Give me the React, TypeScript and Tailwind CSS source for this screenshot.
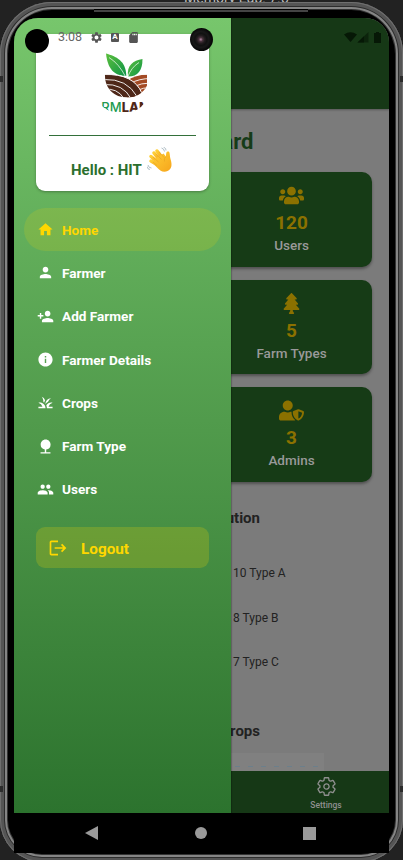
import React from "react";
import { MdHome, MdPerson, MdPersonAdd, MdInfo, MdGrass, MdNature, MdPeople, MdSettings, MdSdCard } from "react-icons/md";
import { FaTree, FaUserShield, FaUsers } from "react-icons/fa";
import { IoSettingsOutline } from "react-icons/io5";

const menu = [
  { label: "Home", Icon: MdHome },
  { label: "Farmer", Icon: MdPerson },
  { label: "Add Farmer", Icon: MdPersonAdd },
  { label: "Farmer Details", Icon: MdInfo },
  { label: "Crops", Icon: MdGrass },
  { label: "Farm Type", Icon: MdNature },
  { label: "Users", Icon: MdPeople },
];

const stats = [
  { value: "120", label: "Users", Icon: FaUsers },
  { value: "5", label: "Farm Types", Icon: FaTree },
  { value: "3", label: "Admins", Icon: FaUserShield },
];

function FarmLogo() {
  return (
    <div className="mt-[18px] flex h-[60px] w-[50px] flex-col items-center overflow-hidden rounded-b-[19px]">
      <svg className="h-[46px] w-[50px] shrink-0" viewBox="96 51.500 50 46">
        <defs>
          <linearGradient id="leaf" x1="0" y1="0" x2="1" y2="1">
            <stop offset="0" stopColor="#5cbf3c" />
            <stop offset="1" stopColor="#0e9447" />
          </linearGradient>
          <clipPath id="bowl">
            <path d="M104 74H148C148.500 88 139 97 126 97C113 97 103.500 88 104 74Z" />
          </clipPath>
        </defs>
        <path d="M105 53C115 56 125 60 125.300 75.500C116 75 107 72 105 53Z" fill="url(#leaf)" />
        <path d="M141.500 58.500C141.500 70 137 76 127 76C125.500 65 132 60 141.500 58.500Z" fill="url(#leaf)" />
        <path d="M108 57Q118 63 125 77M138 62Q130 67 126.500 77" stroke="#fff" strokeWidth=".7" fill="none" />
        <g clipPath="url(#bowl)">
          <path d="M126 80Q136 74 149 74V98H126Z" fill="#a34a24" />
          <path d="M129 83Q138 78 150 78M133 86Q140 82.500 150 82.500M136 90Q142 87 150 87" stroke="#fff" strokeWidth=".9" fill="none" />
          <path d="M103 74Q133 73 141 93L130 99H103Z" fill="#4e2718" stroke="#fff" strokeWidth="1" />
          <path d="M103 79Q126 78 136 96M103 84Q122 83 130 98M103 89Q116 87 123 98" stroke="#fff" strokeWidth=".9" fill="none" />
        </g>
      </svg>
      <div className="mt-[1px] shrink-0 whitespace-nowrap font-[Inter,sans-serif] text-[13px] font-medium leading-[16px] text-[#229a50]">
        FARM<span className="font-extrabold text-[#4e2718]">LAND</span>
      </div>
    </div>
  );
}

function WavingHand() {
  return (
    <svg className="mb-[14px] ml-[6px] h-[26px] w-[26px] shrink-0" viewBox="0 0 52 52">
      <defs>
        <linearGradient id="skin" x1="0" y1="0" x2="1" y2="1">
          <stop offset="0" stopColor="#ffcf35" />
          <stop offset="1" stopColor="#f6a51c" />
        </linearGradient>
      </defs>
      <g stroke="url(#skin)" strokeWidth="7" strokeLinecap="round">
        <path d="M25 26L14 12" />
        <path d="M30 22L20 8" />
        <path d="M22 31L8 19" />
        <path d="M22 36L8 28" />
      </g>
      <path d="M18 22L33 13L38 19C38 11 39 8 43 9C46 10 45 15 47 24C51 37 49 44 41 48C33 52 25 47 20 41L11 32Z" fill="url(#skin)" />
      <path d="M12 20L23 30M18 13L29 25M24 9L34 21M12 30L20 37M38 19Q33 23 35 29" stroke="#e09a20" strokeWidth="1" fill="none" />
      <path d="M29 2Q34 3 35 9M33 0Q39 3 38 7M2 36Q3 42 9 42M0 39Q1 45 6 45" stroke="#9aabb5" strokeWidth="1.500" fill="none" />
    </svg>
  );
}

function Drawer() {
  return (
    <aside className="absolute left-0 top-0 flex h-[795px] w-[217px] flex-col items-center bg-linear-to-b from-[#77c66c] to-[#2c732e] shadow-[1px_0_1px_rgba(0,0,0,0.2)]">
      <div className="mt-[16px] flex h-[157px] w-[173px] shrink-0 flex-col items-center rounded-[9px] bg-white shadow-[0_1px_3px_rgba(0,0,0,0.3)]">
        <div className="flex w-full pl-[61px]"><FarmLogo /></div>
        <div className="mt-[23px] h-px w-[147px] bg-[#33703a]" />
        <div className="mt-[10px] flex h-[41px] w-full items-end pl-[35px] text-[15px] font-bold leading-[18px] text-[#2c6f2e]">
          <span className="mb-[8px] w-[70px] whitespace-nowrap">Hello : HIT</span>
          <WavingHand />
        </div>
      </div>
      <nav className="mt-[17px] flex w-[197px] flex-col">
        {menu.map(({ label, Icon }, i) => (
          <div key={label} className={`flex h-[43.300px] items-center gap-[8px] rounded-full pl-[13px] text-[13.600px] font-bold leading-[17px] ${i === 0 ? "bg-[#ffd700]/15 text-[#ffd700]" : "text-white"}`}>
            <Icon size={17} />
            <span className="mt-px">{label}</span>
          </div>
        ))}
      </nav>
      <div className="mt-[16px] flex h-[41px] w-[173px] items-center gap-[13px] rounded-[9px] bg-[#ffd700]/20 pl-[12px] text-[15.300px] font-bold text-[#ffd700]">
        <svg width="20" height="20" viewBox="0 0 24 24" fill="currentColor">
          <path d="M17 7l-1.410 1.410L18.170 11H8v2h10.170l-2.580 2.580L17 17l5-5M4 5h8V3H4c-1.100 0-2 .9-2 2v14c0 1.100.9 2 2 2h8v-2H4V5z" />
        </svg>
        <span className="mt-[3px]">Logout</span>
      </div>
    </aside>
  );
}

function Dashboard() {
  return (
    <main className="flex h-[795px] flex-col bg-[#7b7b7b]">
      <div className="h-[91px] shrink-0 bg-[#163816] shadow-[0_1px_2px_rgba(0,0,0,0.3)]" />
      <h1 className="mt-[18px] w-[239.500px] text-right text-[22px] font-bold leading-[30px] text-[#163b18]">Dashboard</h1>
      <div className="mt-[15px] flex flex-col gap-[13px] px-[17px]">
        {stats.map(({ value, label, Icon }) => (
          <div key={label} className="flex h-[94.700px] flex-col items-center rounded-[10px] bg-[#163b16] pl-[180px] shadow-[0_2px_3px_rgba(0,0,0,0.35)]">
            <Icon className="mt-[13px] h-[21px] w-[25px] shrink-0 text-[#8b7100]" />
            <div className="mt-[5px] text-[19px] font-bold leading-[24px] text-[#8b7100]">{value}</div>
            <div className="text-[13.500px] font-medium leading-[20px] text-[#999]">{label}</div>
          </div>
        ))}
      </div>
      <h2 className="mt-[26px] w-[246px] text-right text-[15px] font-bold leading-[20px] text-[#222]">Distribution</h2>
      <div className="mt-[34px] flex flex-col pl-[219px] text-[12px] text-[#222]">
        {["10 Type A", "8 Type B", "7 Type C"].map((t) => (
          <div key={t} className="h-[44.700px] leading-[22px]">{t}</div>
        ))}
      </div>
      <h2 className="mt-[25px] w-[246px] text-right text-[15px] font-bold leading-[20px] text-[#222]">Crops</h2>
      <div className="mt-[12px] w-[310px] grow bg-[#808080] pt-[13px]">
        <div className="h-px bg-[repeating-linear-gradient(90deg,#6c7f8b_0_5px,transparent_5px_13px)]" />
      </div>
      <div className="flex h-[42px] shrink-0 flex-col bg-[#163816] pl-[249px]">
        <div className="flex w-[126px] flex-col items-center text-[#8f8f8f]">
          <IoSettingsOutline size={21} className="mt-[5px]" />
          <span className="mt-[2px] text-[8.500px] font-medium leading-[12px]">Settings</span>
        </div>
      </div>
    </main>
  );
}

function StatusBar() {
  return (
    <div className="absolute left-0 top-0 flex h-[40px] w-full items-center pl-[11px] pr-[7px]">
      <div className="mt-[5px] h-[24px] w-[24px] rounded-full bg-black" />
      <span className="ml-[9px] mt-[-2px] w-[32px] text-[12.500px] text-[#666]">3:08</span>
      <MdSettings size={13} className="mt-[-2px] text-[#555]" />
      <span className="ml-[8px] mt-[-2px] flex h-[9px] w-[8px] items-center justify-center rounded-[1px] bg-[#555] text-[8px] font-bold text-white">A</span>
      <MdSdCard size={13} className="ml-[8px] mt-[-2px] text-[#555]" />
      <div className="ml-[50px] mt-[3px] h-[23px] w-[23px] rounded-full bg-[radial-gradient(circle_at_47%_50%,#b889a8_0,#49343d_2px,#221c1e_4px,#111_6px,#181818_8px,#080808_11px)]" />
      <svg className="ml-auto mt-[-2px] h-[13px] w-[38px] text-[#061806]" viewBox="0 0 38 13" fill="currentColor">
        <path d="M0 3.500Q6.500-1 13 3.500L6.500 11Z" />
        <path d="M13.500 11.500L24.500 1V11.500Z" opacity=".6" />
        <path d="M13.500 11.500L20 5.200V11.500Z" />
        <path d="M30 2H32V1H35V2H37V12H30Z" />
      </svg>
    </div>
  );
}

export default function App() {
  return (
    <div className="relative h-[860px] w-[403px] overflow-hidden bg-[#222] font-[Roboto,sans-serif]">
      <div className="absolute left-[184px] top-[-9px] whitespace-nowrap text-[14px] leading-[15px] text-[#bbb]">Memory Eap: 7.5</div>
      <div className="absolute left-0 top-[2px] h-[860px] w-[403px] rounded-t-[52px] rounded-b-[42px] bg-black shadow-[inset_0_0_0_1px_#6f6f6f,inset_0_0_0_4px_#555,inset_0_0_0_5px_#2c2c2c,inset_0_0_0_7px_#858585,inset_0_0_0_8px_#333]">
        <div className="absolute left-[94px] top-[7px] h-[3px] w-[214px] border-t border-black bg-[#444]" />
        <div className="absolute left-0 top-[74px] h-[6px] w-[3px] bg-[#2c2c2c]" />
        <div className="absolute right-0 top-[74px] h-[6px] w-[3px] bg-[#2c2c2c]" />
        <div className="absolute left-0 top-[784px] h-[6px] w-[3px] bg-[#2c2c2c]" />
        <div className="absolute right-0 top-[784px] h-[6px] w-[3px] bg-[#2c2c2c]" />
        <div className="ml-[14px] h-[851px] w-[375px] pt-[16px]">
          <div className="relative h-[795px] overflow-hidden rounded-t-[24px]">
            <Dashboard />
            <Drawer />
            <StatusBar />
          </div>
          <div className="flex h-[40px] items-center bg-black text-[#9a9a9a]">
            <svg className="ml-[71px] h-[14px] w-[13px]" viewBox="0 0 13 14" fill="currentColor"><path d="M0 7L13 0V14Z" /></svg>
            <span className="ml-[97px] h-[12px] w-[12px] rounded-full bg-current" />
            <span className="ml-[96px] h-[13px] w-[13px] bg-current" />
          </div>
        </div>
      </div>
    </div>
  );
}
